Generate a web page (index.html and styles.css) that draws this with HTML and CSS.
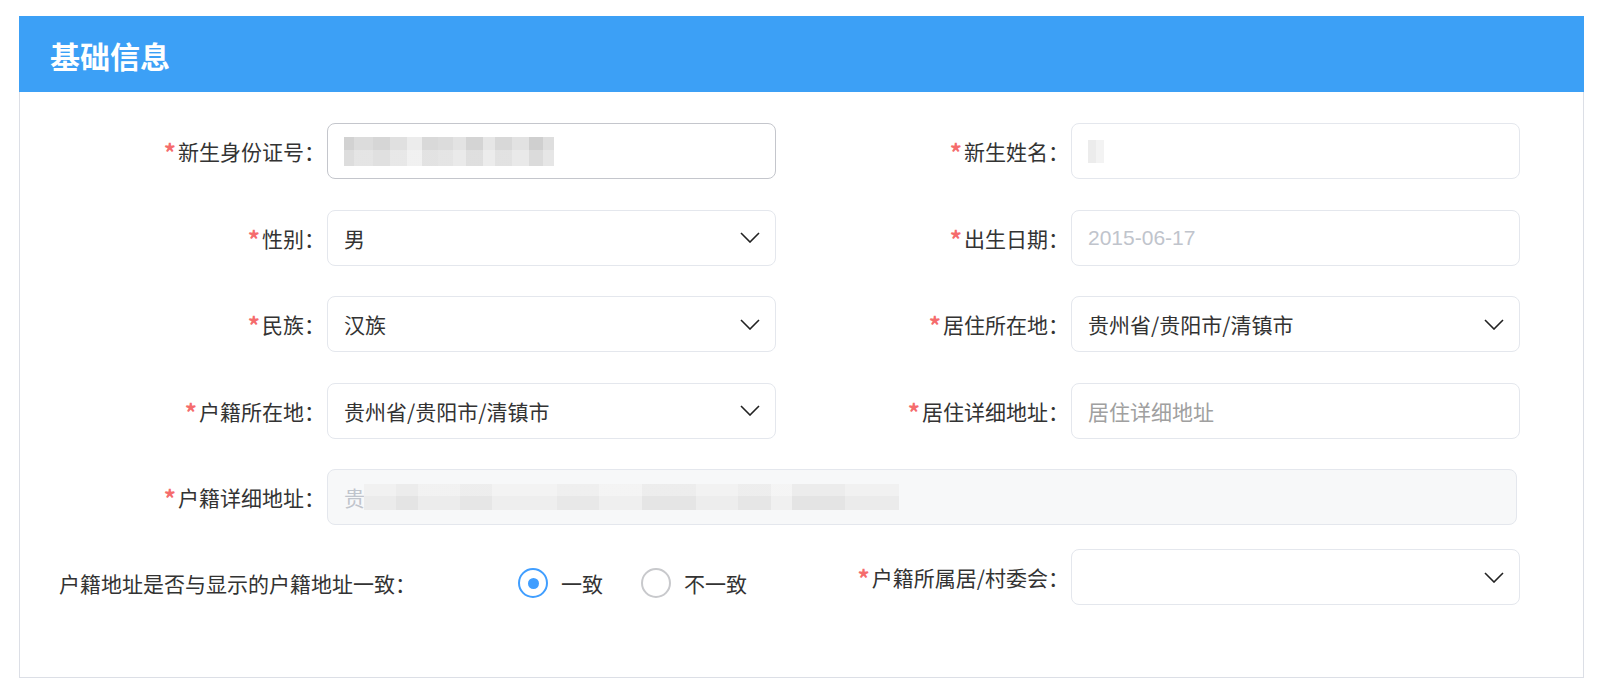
FILE: index.html
```html
<!DOCTYPE html>
<html lang="zh-CN">
<head>
<meta charset="utf-8">
<title>基础信息</title>
<link rel="stylesheet" href="styles.css">
</head>
<body>
<div class="panel">
  <div class="panel-head"><h2 class="panel-title">基础信息</h2></div>
  <div class="form">
    <div class="row">
      <label class="lbl"><span class="req">*</span>新生身份证号：</label>
      <div class="field field-active"><span class="blur blur-id"></span></div>
      <label class="lbl"><span class="req">*</span>新生姓名：</label>
      <div class="field"><span class="blur blur-name"></span></div>
    </div>
    <div class="row">
      <label class="lbl"><span class="req">*</span>性别：</label>
      <div class="field"><span class="val">男</span><svg class="chev" viewBox="0 0 20 11"><polyline points="1,1 10,10 19,1"/></svg></div>
      <label class="lbl"><span class="req">*</span>出生日期：</label>
      <div class="field"><span class="val val-date">2015-06-17</span></div>
    </div>
    <div class="row">
      <label class="lbl"><span class="req">*</span>民族：</label>
      <div class="field"><span class="val">汉族</span><svg class="chev" viewBox="0 0 20 11"><polyline points="1,1 10,10 19,1"/></svg></div>
      <label class="lbl"><span class="req">*</span>居住所在地：</label>
      <div class="field"><span class="val">贵州省/贵阳市/清镇市</span><svg class="chev" viewBox="0 0 20 11"><polyline points="1,1 10,10 19,1"/></svg></div>
    </div>
    <div class="row">
      <label class="lbl"><span class="req">*</span>户籍所在地：</label>
      <div class="field"><span class="val">贵州省/贵阳市/清镇市</span><svg class="chev" viewBox="0 0 20 11"><polyline points="1,1 10,10 19,1"/></svg></div>
      <label class="lbl"><span class="req">*</span>居住详细地址：</label>
      <div class="field"><span class="val val-ph">居住详细地址</span></div>
    </div>
    <div class="row">
      <label class="lbl"><span class="req">*</span>户籍详细地址：</label>
      <div class="field field-wide field-disabled"><span class="val val-dis">贵</span><span class="blur blur-addr"></span></div>
    </div>
    <div class="row row-last">
      <div class="radio-cell">
        <span class="radio-q">户籍地址是否与显示的户籍地址一致：</span>
        <span class="radio radio-on"><span class="radio-dot"></span></span><span class="radio-text">一致</span>
        <span class="radio radio-off"></span><span class="radio-text">不一致</span>
      </div>
      <label class="lbl"><span class="req">*</span>户籍所属居/村委会：</label>
      <div class="field"><span class="val"></span><svg class="chev" viewBox="0 0 20 11"><polyline points="1,1 10,10 19,1"/></svg></div>
    </div>
  </div>
</div>
</body>
</html>
```

FILE: styles.css
```css
* { box-sizing: border-box; }
html, body { margin: 0; padding: 0; background: #fff; }
body {
  font-family: "Noto Sans CJK SC", "Noto Sans", sans-serif;
  color: #333;
}
.panel {
  margin: 16px 0 0 19px;
  width: 1565px;
  height: 662px;
  border: 1px solid #dcdfe6;
  border-top: none;
}
.panel-head {
  height: 76px;
  margin: 0 -1px;
  background: #3ca0f6;
  display: flex;
  align-items: center;
  padding-left: 31px;
}
.panel-title {
  margin: 0;
  color: #fff;
  font-size: 30px;
  font-weight: 700;
  line-height: 1;
  padding-top: 1px;
}
.form {
  padding-top: 31px;
  display: flex;
  flex-direction: column;
}
.row {
  display: grid;
  grid-template-columns: 307px 449px 295px 449px;
  height: 56px;
}
.row + .row { margin-top: 30.5px; }
.row.row-last { margin-top: 24px; }
.lbl {
  display: flex;
  align-items: center;
  justify-content: flex-end;
  padding-right: 2px;
  font-size: 21px;
  color: #333;
  white-space: nowrap;
}
.req {
  color: #f56c6c;
  font-size: 24px;
  font-weight: 700;
  line-height: 1;
  margin-right: 2px;
  position: relative;
  top: 1px;
}
.field {
  height: 56px;
  border: 1px solid #e4e7ed;
  border-radius: 8px;
  padding: 0 15px 0 16px;
  display: flex;
  align-items: center;
  justify-content: space-between;
  background: #fff;
}
.field-active { border-color: #c4c6cc; justify-content: flex-start; }
.field-wide { grid-column: 2 / 5; margin-right: 3px; justify-content: flex-start; }
.field-disabled { background: #f7f8f9; }
.val { font-size: 21px; color: #333; white-space: nowrap; }
.val-date { font-family: "Liberation Sans", "Noto Sans CJK SC", sans-serif; color: #c0c4cc; }
.val-ph { color: #a0a0a0; }
.val-dis { color: #c0c4cc; }
.chev {
  width: 20px;
  height: 11px;
  fill: none;
  stroke: #222;
  stroke-width: 1.6;
  flex: none;
}
.blur { display: block; flex: none; }
.blur-id {
  width: 210px;
  height: 29px;
  background:
    linear-gradient(180deg, rgba(255,255,255,0) 0 45%, rgba(255,255,255,0.25) 45% 100%),
    linear-gradient(90deg, #d2d2d2 0 5%, #dcdcdc 5% 14%, #d6d6d6 14% 22%, #e0e0e0 22% 30%, #ececec 30% 37%, #d9d9d9 37% 45%, #dcdcdc 45% 52%, #e3e3e3 52% 58%, #d4d4d4 58% 66%, #e6e6e6 66% 72%, #d8d8d8 72% 80%, #e2e2e2 80% 88%, #cfcfcf 88% 95%, #dedede 95% 100%);
}
.blur-name {
  width: 16px;
  height: 23px;
  background: linear-gradient(90deg, #ececec 0 50%, #f3f3f3 50% 100%);
}
.blur-addr {
  width: 535px;
  height: 26px;
  margin-left: -1px;
  background:
    linear-gradient(180deg, rgba(255,255,255,0.3) 0 45%, rgba(255,255,255,0) 45% 100%),
    linear-gradient(90deg, #ebebeb 0 6%, #e4e4e4 6% 10%, #ececec 10% 18%, #e6e6e6 18% 24%, #eeeeee 24% 36%, #e8e8e8 36% 44%, #efefef 44% 52%, #e5e5e5 52% 62%, #ededed 62% 70%, #e6e6e6 70% 76%, #f0f0f0 76% 80%, #e4e4e4 80% 90%, #ebebeb 90% 100%);
}
.radio-cell {
  grid-column: 1 / 3;
  display: flex;
  align-items: center;
  padding-left: 39px;
  padding-top: 12px;
  white-space: nowrap;
}
.radio-q {
  width: 459px;
  flex: none;
  font-size: 21px;
  color: #333;
  white-space: nowrap;
}
.radio {
  width: 30px;
  height: 30px;
  border-radius: 50%;
  border: 2px solid #c8c9cc;
  display: flex;
  align-items: center;
  justify-content: center;
  flex: none;
}
.radio-on { border-color: #409eff; }
.radio-dot {
  width: 11px;
  height: 11px;
  border-radius: 50%;
  background: #409eff;
}
.radio-text {
  flex: none;
  font-size: 21px;
  color: #333;
  margin-left: 13px;
  margin-right: 38px;
  white-space: nowrap;
}
```
